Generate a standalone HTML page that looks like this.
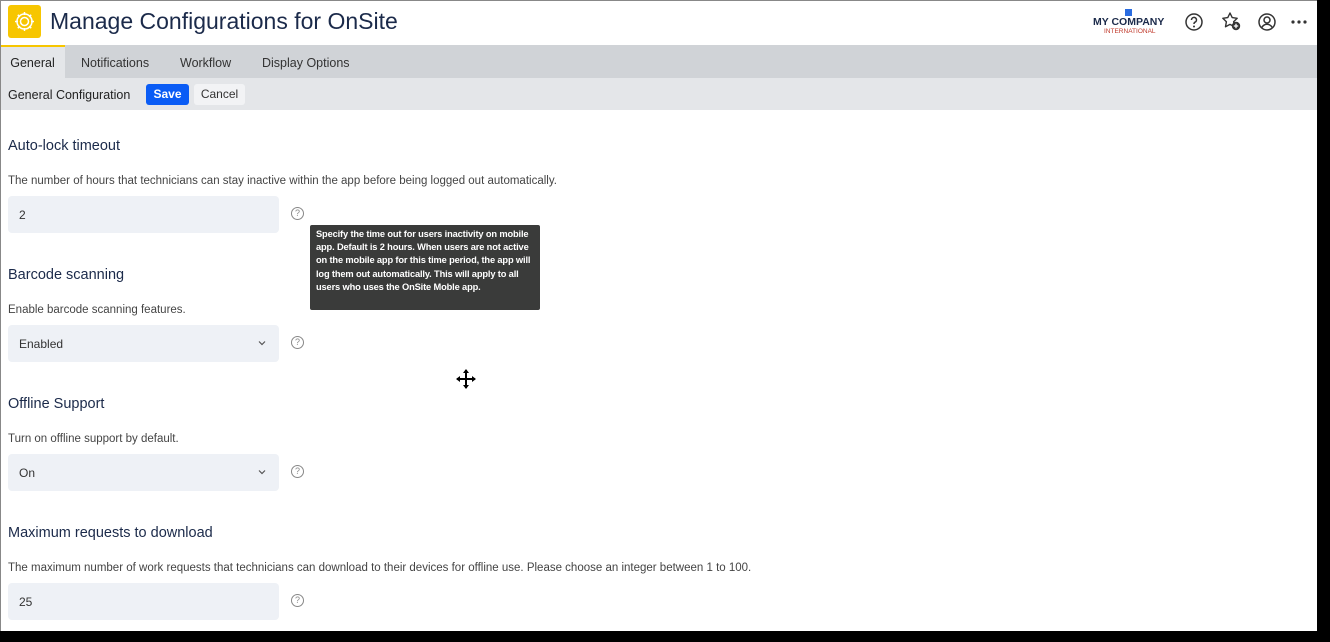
<!DOCTYPE html>
<html><head><meta charset="utf-8"><style>
*{margin:0;padding:0;box-sizing:border-box}
body{width:1330px;height:642px;background:#000;font-family:"Liberation Sans",sans-serif;overflow:hidden;position:relative}
#win{position:absolute;left:0;top:0;width:1317px;height:631px;background:#fff;overflow:hidden}
#win:before{content:"";position:absolute;left:0;top:0;width:1px;height:631px;background:#888;z-index:5}
#win:after{content:"";position:absolute;left:0;top:0;width:1317px;height:1px;background:#888;z-index:5}
.hdr{height:45px;position:relative}
.logo{position:absolute;left:8px;top:5px;width:33px;height:33px;background:#f7c600;border-radius:3px}
.title{position:absolute;left:50px;top:8px;font-size:23px;color:#1b2a4a}
.tabs{position:absolute;top:45px;left:0;right:0;height:33px;background:#d0d3d7}
.tab{position:absolute;top:0;height:33px;line-height:37px;font-size:12.5px;color:#333}
.sub{position:absolute;top:78px;left:0;right:0;height:32px;background:#e4e6e9;font-size:12.5px;color:#222}
.in{position:absolute;left:8px;width:271px;height:37px;background:#eef1f6;border-radius:4px;font-size:12px;color:#333;padding:12px 0 0 11px}
.h{position:absolute;left:8px;font-size:14.5px;color:#1b2a4a}
.d{position:absolute;left:8px;font-size:11.5px;color:#444}
.q{position:absolute;left:291px;width:13px;height:13px;border:1.3px solid #888;border-radius:50%;font-size:9px;color:#888;text-align:center;line-height:11px}
.chev{position:absolute;right:13px;top:11px}
</style></head><body><div id="win">
<div class="hdr">
<div class="logo"><svg width="33" height="33" viewBox="0 0 33 33"><g fill="none" stroke="#fff" stroke-width="1.5"><circle cx="16.5" cy="16.5" r="4"/><path d="M16.5 7v3M16.5 23v3M7 16.5h3M23 16.5h3M9.8 9.8l2.1 2.1M21.1 21.1l2.1 2.1M9.8 23.2l2.1-2.1M21.1 11.9l2.1-2.1"/><circle cx="16.5" cy="16.5" r="7.5"/></g></svg></div>
<div class="title">Manage Configurations for OnSite</div>
<div style="position:absolute;left:1093px;top:16px;font-size:10.5px;font-weight:bold;color:#1b2a4a">MY COMPANY</div>
<div style="position:absolute;left:1125px;top:9px;width:7px;height:7px;background:#2a6ce0"></div>
<div style="position:absolute;left:1104px;top:28px;font-size:6.5px;color:#c0392b">INTERNATIONAL</div>
<svg style="position:absolute;left:1184px;top:12px" width="20" height="20" viewBox="0 0 20 20"><circle cx="10" cy="10" r="8" fill="none" stroke="#333" stroke-width="1.5"/><path d="M7.5 8a2.5 2.5 0 1 1 3.5 2.2c-.8.4-1 .9-1 1.8" fill="none" stroke="#333" stroke-width="1.5"/><circle cx="10" cy="14.5" r="1" fill="#333"/></svg>
<svg style="position:absolute;left:1221px;top:11px" width="22" height="22" viewBox="0 0 22 22"><path d="M9 2l2.2 4.6 5 .7-3.6 3.5.9 5L9 13.4 4.5 15.8l.9-5L1.8 7.3l5-.7z" fill="none" stroke="#333" stroke-width="1.4" stroke-linejoin="round"/><circle cx="15" cy="15" r="4.2" fill="#333"/><path d="M15 12.8v4.4M12.8 15h4.4" stroke="#fff" stroke-width="1.3"/></svg>
<svg style="position:absolute;left:1257px;top:12px" width="20" height="20" viewBox="0 0 20 20"><circle cx="10" cy="10" r="8" fill="none" stroke="#333" stroke-width="1.5"/><circle cx="10" cy="8" r="3" fill="none" stroke="#333" stroke-width="1.5"/><path d="M4.8 15.5c1.5-2.5 3-3.2 5.2-3.2s3.7.7 5.2 3.2" fill="none" stroke="#333" stroke-width="1.5"/></svg>
<svg style="position:absolute;left:1291px;top:20px" width="16" height="4"><circle cx="2" cy="2" r="1.6" fill="#333"/><circle cx="8" cy="2" r="1.6" fill="#333"/><circle cx="14" cy="2" r="1.6" fill="#333"/></svg>
</div>
<div class="tabs">
<div class="tab" style="left:0;width:65px;background:#e4e6e9;border-top:2px solid #f7c600;text-align:center;line-height:33px;color:#222">General</div>
<div class="tab" style="left:81px">Notifications</div>
<div class="tab" style="left:180px">Workflow</div>
<div class="tab" style="left:262px">Display Options</div>
</div>
<div class="sub">
<div style="position:absolute;left:8px;top:10px">General Configuration</div>
<div style="position:absolute;left:146px;top:6px;width:43px;height:21px;background:#0a5cf5;color:#fff;font-weight:bold;font-size:12px;text-align:center;line-height:21px;border-radius:3px">Save</div>
<div style="position:absolute;left:194px;top:6px;width:51px;height:21px;background:#f2f3f5;color:#333;font-size:12px;text-align:center;line-height:21px;border-radius:3px">Cancel</div>
</div>
<div class="h" style="top:138px">Auto-lock timeout</div>
<div class="d" style="top:175px">The number of hours that technicians can stay inactive within the app before being logged out automatically.</div>
<div class="in" style="top:196px">2</div><div class="q" style="top:207px">?</div>
<div class="h" style="top:267px">Barcode scanning</div>
<div class="d" style="top:304px">Enable barcode scanning features.</div>
<div class="in" style="top:325px">Enabled<svg class="chev" width="8" height="14" viewBox="0 0 8 14"><path d="M1 5.5l3 3 3-3" fill="none" stroke="#555" stroke-width="1.2"/></svg></div><div class="q" style="top:336px">?</div>
<div class="h" style="top:396px">Offline Support</div>
<div class="d" style="top:433px">Turn on offline support by default.</div>
<div class="in" style="top:454px">On<svg class="chev" width="8" height="14" viewBox="0 0 8 14"><path d="M1 5.5l3 3 3-3" fill="none" stroke="#555" stroke-width="1.2"/></svg></div><div class="q" style="top:465px">?</div>
<div class="h" style="top:525px">Maximum requests to download</div>
<div class="d" style="top:562px">The maximum number of work requests that technicians can download to their devices for offline use. Please choose an integer between 1 to 100.</div>
<div class="in" style="top:583px">25</div><div class="q" style="top:594px">?</div>
<div style="position:absolute;left:310px;top:225px;width:230px;height:85px;background:#3a3b3a;border-radius:2px;color:#fff;font-size:9.3px;font-weight:bold;line-height:13.2px;padding:3px 6px;letter-spacing:-0.15px">Specify the time out for users inactivity on mobile app. Default is 2 hours. When users are not active on the mobile app for this time period, the app will log them out automatically. This will apply to all users who uses the OnSite Moble app.</div>
<svg style="position:absolute;left:455px;top:368px" width="22" height="22" viewBox="0 0 22 22"><path d="M11 2v18M2 11h18" stroke="#000" stroke-width="2"/><path d="M11 1l-3 4h6zM11 21l-3-4h6zM1 11l4-3v6zM21 11l-4-3v6z" fill="#000"/></svg>
</div></body></html>
